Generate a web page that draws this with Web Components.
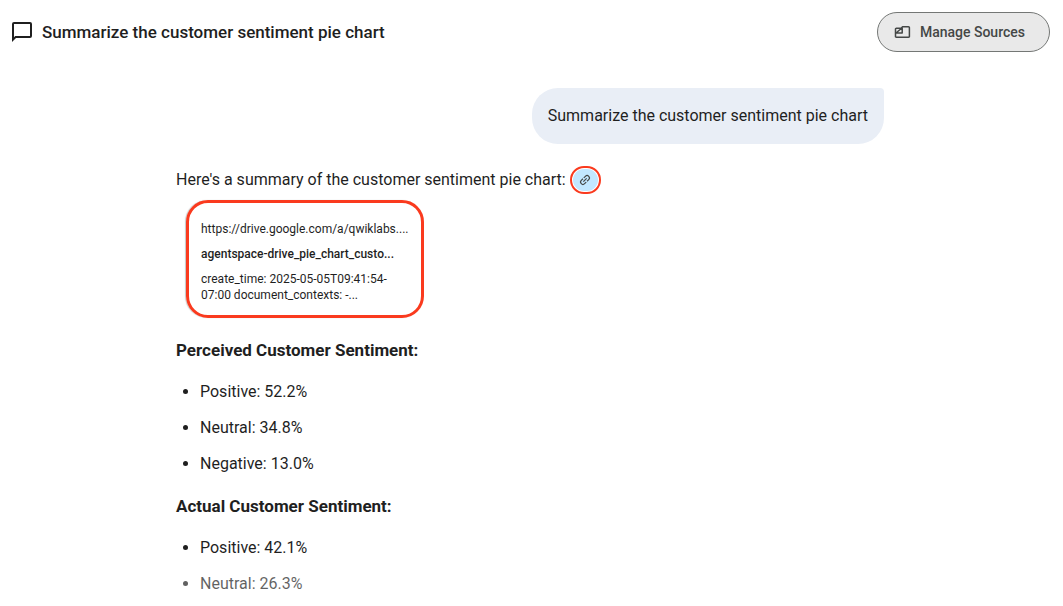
<!DOCTYPE html>
<html lang="en">
<head>
<meta charset="utf-8">
<meta name="viewport" content="width=device-width, initial-scale=1">
<title>Summarize the customer sentiment pie chart</title>
<style>
  body {
    margin: 0;
    background: white;
    color: #1f1f1f;
    font: 16px/24px Roboto, "Liberation Sans", sans-serif;
  }
</style>
</head>
<body>
<script>
class ChatHeader extends HTMLElement {
  constructor() {
    super();
    var shadow = this.attachShadow({ mode: "open" });
    shadow.innerHTML = `
      <style>
        :host { display: block; }
        header {
          display: flex;
          align-items: center;
          gap: 8px;
          min-height: 64px;
          padding: 0 13px 0 10px;
          box-sizing: border-box;
        }
        svg { flex: none; }
        h1 {
          flex: 1;
          margin: 0;
          font-size: 17px;
          font-weight: 500;
        }
      </style>
      <header>
        <svg width="24" height="24" viewBox="0 0 24 24" fill="currentColor" aria-hidden="true">
          <path d="M4 2h16a2 2 0 0 1 2 2v12a2 2 0 0 1-2 2H6l-4 4V4a2 2 0 0 1 2-2zm0 2v13.2L5.2 16H20V4z"/>
        </svg>
        <h1><slot></slot></h1>
        <slot name="action"></slot>
      </header>
    `;
  }
}

class SourcesButton extends HTMLElement {
  constructor() {
    super();
    var shadow = this.attachShadow({ mode: "open" });
    shadow.innerHTML = `
      <style>
        :host { display: block; }
        button {
          display: flex;
          align-items: center;
          gap: 8px;
          height: 40px;
          padding: 0 24px 0 16px;
          border: 1px solid #747775;
          border-radius: 20px;
          background: #e9e9e9;
          color: #444746;
          font: 500 14px/20px Roboto, "Liberation Sans", sans-serif;
          cursor: pointer;
        }
      </style>
      <button type="button">
        <svg width="18" height="18" viewBox="0 0 18 18" fill="none" stroke="currentColor" stroke-width="1.5" stroke-linejoin="round" aria-hidden="true">
          <path d="M8.5 3.8H14.5a.9.9 0 0 1 .9.9V13.4a.9.9 0 0 1-.9.9H2.4a.9.9 0 0 1-.9-.9V6.1a.9.9 0 0 1 .9-.9H7.3z"/>
          <path d="M8.2 4.5V10H1.5M7.6 5.2L2 10"/>
        </svg>
        <slot></slot>
      </button>
    `;
  }
}

class UserMessage extends HTMLElement {
  constructor() {
    super();
    var shadow = this.attachShadow({ mode: "open" });
    shadow.innerHTML = `
      <style>
        :host {
          display: flex;
          justify-content: flex-end;
        }
        p {
          margin: 0;
          padding: 16px;
          border-radius: 26px 4px 26px 26px;
          background: #e9eef6;
        }
      </style>
      <p><slot></slot></p>
    `;
  }
}

class CitationLink extends HTMLElement {
  constructor() {
    super();
    var shadow = this.attachShadow({ mode: "open" });
    shadow.innerHTML = `
      <style>
        :host { display: block; }
        button {
          display: flex;
          align-items: center;
          justify-content: center;
          width: 31px;
          height: 28px;
          padding: 1px;
          border: 2px solid #fa3a1e;
          border-radius: 14px;
          background: #c2e7ff content-box;
          color: #444746;
          cursor: pointer;
        }
      </style>
      <button type="button" aria-label="Show source">
        <svg width="14" height="14" viewBox="0 0 24 24" fill="currentColor" aria-hidden="true">
          <path transform="rotate(-45 12 12)" d="M11 17H7a5 5 0 0 1 0-10h4v2H7a3 3 0 0 0 0 6h4zm-3-4v-2h8v2zm5 4v-2h4a3 3 0 0 0 0-6h-4V7h4a5 5 0 0 1 0 10z"/>
        </svg>
      </button>
    `;
  }
}

class SourceCard extends HTMLElement {
  constructor() {
    super();
    var shadow = this.attachShadow({ mode: "open" });
    shadow.innerHTML = `
      <style>
        :host {
          display: block;
          width: 238px;
          font-size: 12px;
          line-height: 16px;
        }
        a {
          display: flex;
          flex-direction: column;
          gap: 8px;
          padding: 18px 12px 12px;
          border: 3px solid #fa3a1e;
          border-radius: 22px;
          box-shadow: -1px 0 1px #c4c7c5;
          color: inherit;
          text-decoration: none;
        }
        .title {
          font-weight: 500;
          line-height: 18px;
        }
      </style>
      <a href="#source">
        <span><slot name="url"></slot></span>
        <span class="title"><slot name="title"></slot></span>
        <span><slot></slot></span>
      </a>
    `;
  }
}

class SentimentList extends HTMLElement {
  constructor() {
    super();
    var shadow = this.attachShadow({ mode: "open" });
    shadow.innerHTML = `
      <style>
        :host { display: block; }
        h2 {
          margin: 0 0 18px;
          font-size: 17px;
          font-weight: 700;
        }
        ul {
          display: flex;
          flex-direction: column;
          gap: 12px;
          margin: 0;
          padding-left: 24px;
        }
        ::slotted(li.fading) { opacity: 0.7; }
      </style>
      <h2><slot name="heading"></slot></h2>
      <ul><slot></slot></ul>
    `;
  }
}

class ChatThread extends HTMLElement {
  constructor() {
    super();
    var shadow = this.attachShadow({ mode: "open" });
    shadow.innerHTML = `
      <style>
        :host {
          display: block;
          padding-right: 3px;
        }
        main {
          max-width: 708px;
          margin: 0 auto;
          padding: 24px 0 8px;
        }
        .intro {
          display: flex;
          align-items: center;
          gap: 4px;
          margin-top: 22px;
        }
        .intro p { margin: 0; }
        .source { margin: 6px 0 20px 10px; }
        .lists {
          display: flex;
          flex-direction: column;
          gap: 18px;
        }
      </style>
      <main>
        <slot name="question"></slot>
        <div class="intro">
          <p><slot name="intro"></slot></p>
          <slot name="citation"></slot>
        </div>
        <div class="source"><slot name="source"></slot></div>
        <div class="lists"><slot></slot></div>
      </main>
    `;
  }
}

customElements.define("chat-header", ChatHeader);
customElements.define("sources-button", SourcesButton);
customElements.define("user-message", UserMessage);
customElements.define("citation-link", CitationLink);
customElements.define("source-card", SourceCard);
customElements.define("sentiment-list", SentimentList);
customElements.define("chat-thread", ChatThread);
</script>

<chat-header>
  Summarize the customer sentiment pie chart
  <sources-button slot="action">Manage Sources</sources-button>
</chat-header>

<chat-thread>
  <user-message slot="question">Summarize the customer sentiment pie chart</user-message>
  <span slot="intro">Here's a summary of the customer sentiment pie chart:</span>
  <citation-link slot="citation"></citation-link>
  <source-card slot="source">
    <span slot="url">https://drive.google.com/a/qwiklabs....</span>
    <span slot="title">agentspace-drive_pie_chart_custo...</span>
    create_time: 2025-05-05T09:41:54-07:00 document_contexts: -...
  </source-card>
  <sentiment-list>
    <span slot="heading">Perceived Customer Sentiment:</span>
    <li>Positive: 52.2%</li>
    <li>Neutral: 34.8%</li>
    <li>Negative: 13.0%</li>
  </sentiment-list>
  <sentiment-list>
    <span slot="heading">Actual Customer Sentiment:</span>
    <li>Positive: 42.1%</li>
    <li class="fading">Neutral: 26.3%</li>
  </sentiment-list>
</chat-thread>
</body>
</html>
